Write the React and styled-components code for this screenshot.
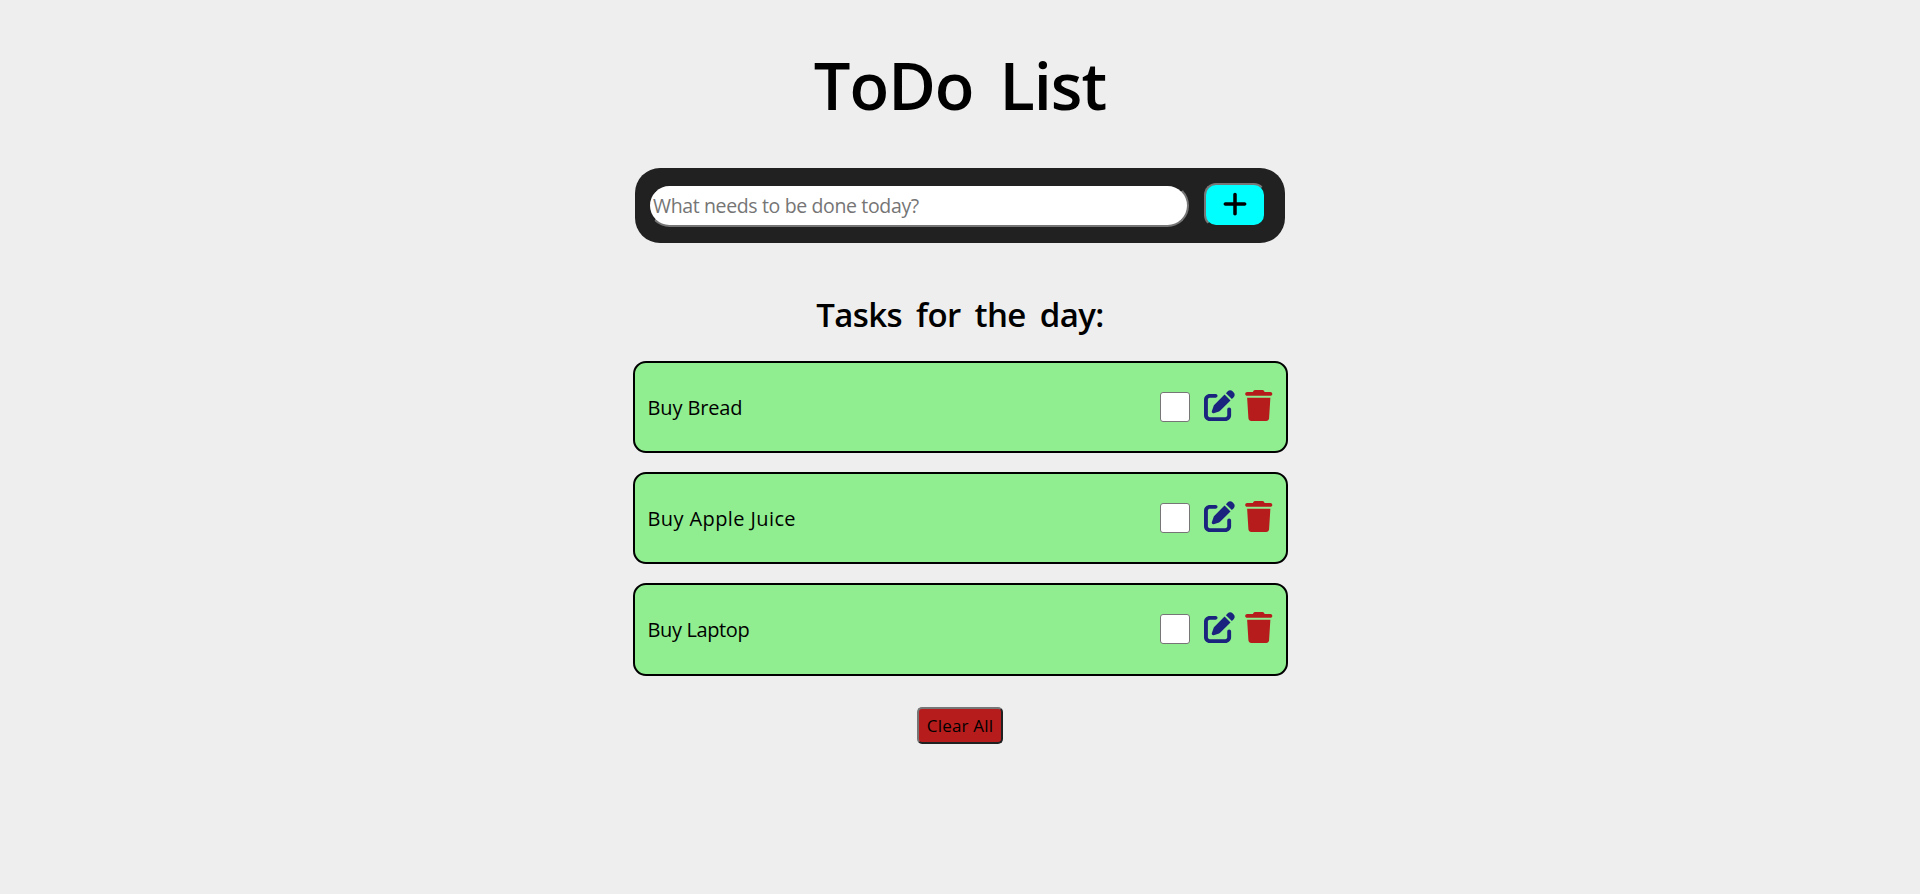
import React, { useState } from "react";
import styled, { createGlobalStyle } from "styled-components";
import { FaPenToSquare, FaPlus, FaTrash } from "react-icons/fa6";

const GlobalStyle = createGlobalStyle`
  * { box-sizing: border-box; }
  body {
    margin: 0;
    background: #eeeeee;
    color: #000;
    font-family: "Comic Sans MS", "Open Sans", sans-serif;
  }
`;

const Page = styled.main`
  display: flex;
  flex-direction: column;
  align-items: center;
  min-height: 894px;
  padding-top: 39px;
`;

const Title = styled.h1`
  margin: 0 0 37px;
  font-size: 65px;
  line-height: 92px;
  font-weight: 600;
  letter-spacing: -1px;
  word-spacing: 10px;
  white-space: nowrap;
`;

const AddForm = styled.form`
  display: flex;
  align-items: flex-start;
  width: 650px;
  height: 75px;
  padding: 15px 19px 0 13px;
  border-radius: 25px;
  background: #212121;
`;

const TaskInput = styled.input`
  width: 541px;
  height: 43px;
  margin: 1px 15px 0 0;
  padding: 1px 2px 1px 3px;
  border: 2px solid;
  border-color: #212121 #767676 #767676 #212121;
  border-radius: 22px;
  outline: none;
  background: #fff;
  font: 19.5px "Comic Sans MS", "Open Sans", sans-serif;
  letter-spacing: -0.36px;

  &::placeholder { color: #757575; opacity: 1; }
`;

const AddButton = styled.button`
  display: flex;
  align-items: center;
  justify-content: center;
  width: 62px;
  height: 44px;
  padding: 0 0 3px;
  border: 2px solid;
  border-color: #767676 #212121 #212121 #767676;
  border-radius: 12px;
  background: #00ffff;
  color: #000;
  font-size: 28px;
`;

const Subtitle = styled.h2`
  margin: 50px 0 24px;
  font-size: 33px;
  line-height: 44px;
  font-weight: 600;
  letter-spacing: -0.6px;
  word-spacing: 6px;
  white-space: nowrap;
`;

const TaskList = styled.ul`
  display: flex;
  flex-direction: column;
  gap: 19px;
  width: 655px;
  margin: 0;
  padding: 0;
  list-style: none;
`;

const Task = styled.li`
  display: flex;
  align-items: center;
  height: 92.2px;
  padding: 0 13px;
  border: 2px solid #000;
  border-radius: 13px;
  background: #90ee90;
`;

const TaskName = styled.span`
  flex: 1;
  padding-top: 2px;
  font-size: 20px;
  line-height: 28px;
  letter-spacing: ${(p) => p.$spacing}px;
`;

const Checkbox = styled.input`
  appearance: none;
  width: 30px;
  height: 30px;
  margin: 0 14px 1px 0;
  border: 1px solid #767676;
  border-radius: 3px;
  background: #fff;

  &:checked { background: #0075ff; }
`;

const IconButton = styled.button`
  display: flex;
  margin: 0 ${(p) => p.$gap || 0}px 4px 0;
  padding: 0;
  border: 0;
  background: none;
  color: ${(p) => p.$color};
  font-size: 31px;

  svg { width: ${(p) => p.$width}px; }
`;

const ClearButton = styled.button`
  width: 86px;
  height: 37px;
  margin-top: 31px;
  padding: 0;
  border: 2px solid;
  border-color: #767676 #212121 #212121 #767676;
  border-radius: 5px;
  background: #b71c1c;
  color: #000;
  font: 17px "Comic Sans MS", "Open Sans", sans-serif;
  letter-spacing: 0.2px;
  white-space: nowrap;
`;

const initialTasks = [
  { name: "Buy Bread", spacing: -0.13 },
  { name: "Buy Apple Juice", spacing: 0.4 },
  { name: "Buy Laptop", spacing: -0.37 },
];

export default function App() {
  const [tasks, setTasks] = useState(initialTasks);
  const [draft, setDraft] = useState("");

  const addTask = (event) => {
    event.preventDefault();
    if (!draft.trim()) return;
    setTasks([...tasks, { name: draft.trim(), spacing: 0 }]);
    setDraft("");
  };

  return (
    <>
      <GlobalStyle />
      <Page>
        <Title>ToDo List</Title>
        <AddForm onSubmit={addTask}>
          <TaskInput
            value={draft}
            onChange={(event) => setDraft(event.target.value)}
            placeholder="What needs to be done today?"
          />
          <AddButton aria-label="Add task"><FaPlus /></AddButton>
        </AddForm>
        <Subtitle>Tasks for the day:</Subtitle>
        <TaskList>
          {tasks.map((task, index) => (
            <Task key={index}>
              <TaskName $spacing={task.spacing}>{task.name}</TaskName>
              <Checkbox type="checkbox" aria-label="Done" />
              <IconButton $color="#1a237e" $width={31} $gap={10} aria-label="Edit">
                <FaPenToSquare />
              </IconButton>
              <IconButton
                $color="#b71c1c"
                $width={27.5}
                aria-label="Delete"
                onClick={() => setTasks(tasks.filter((_, i) => i !== index))}
              >
                <FaTrash />
              </IconButton>
            </Task>
          ))}
        </TaskList>
        <ClearButton onClick={() => setTasks([])}>Clear All</ClearButton>
      </Page>
    </>
  );
}
